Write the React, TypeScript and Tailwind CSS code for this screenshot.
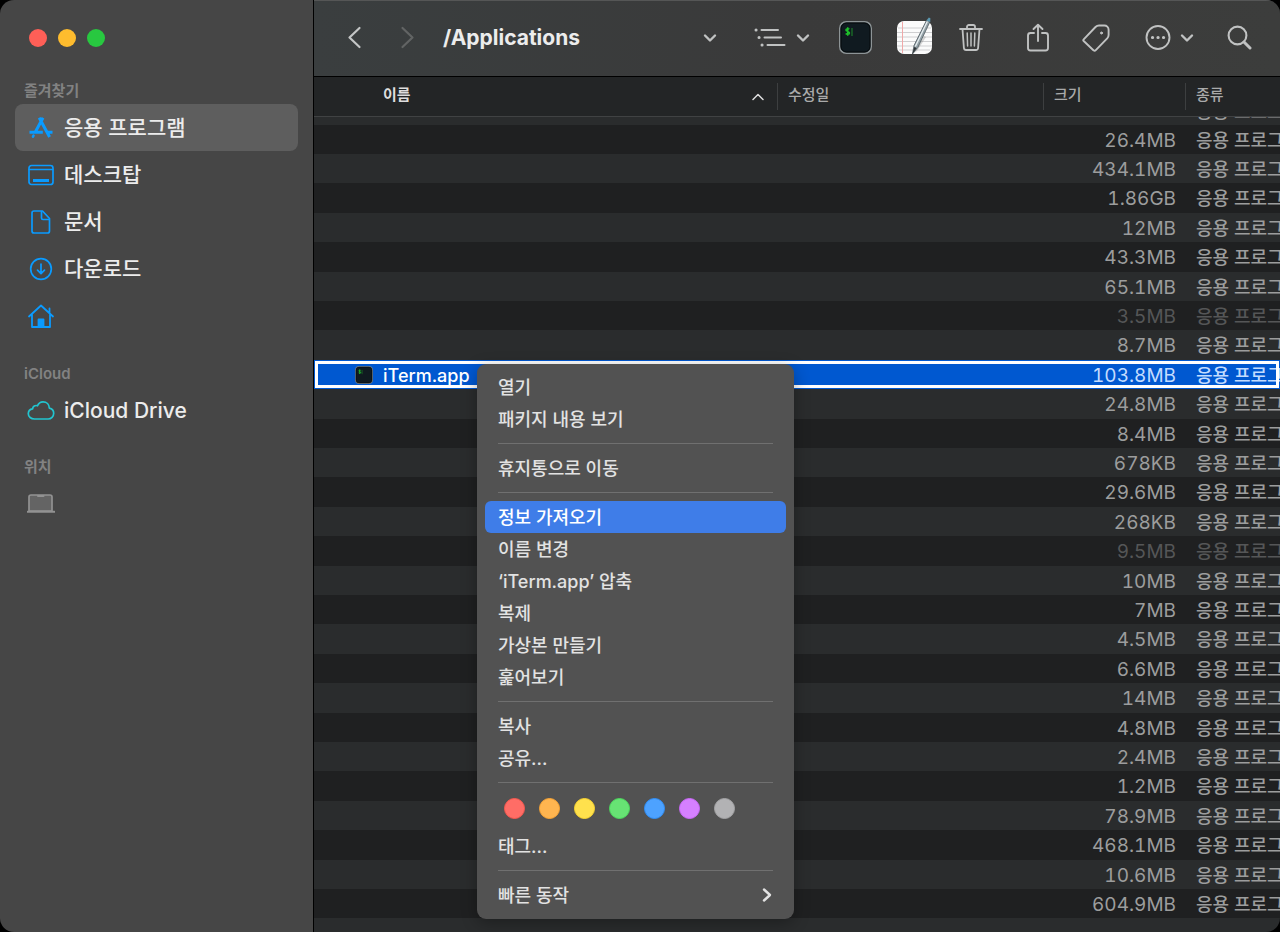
import React from "react";

type Row = { size: string; dim?: boolean; selected?: boolean };

const rows: Row[] = [
  { size: "26.4MB" },
  { size: "434.1MB" },
  { size: "1.86GB" },
  { size: "12MB" },
  { size: "43.3MB" },
  { size: "65.1MB" },
  { size: "3.5MB", dim: true },
  { size: "8.7MB" },
  { size: "103.8MB", selected: true },
  { size: "24.8MB" },
  { size: "8.4MB" },
  { size: "678KB" },
  { size: "29.6MB" },
  { size: "268KB" },
  { size: "9.5MB", dim: true },
  { size: "10MB" },
  { size: "7MB" },
  { size: "4.5MB" },
  { size: "6.6MB" },
  { size: "14MB" },
  { size: "4.8MB" },
  { size: "2.4MB" },
  { size: "1.2MB" },
  { size: "78.9MB" },
  { size: "468.1MB" },
  { size: "10.6MB" },
  { size: "604.9MB" },
];

const KIND = "응용 프로그램";

function Svg({ w, h, className, sw = 2, children }: { w: number; h: number; className?: string; sw?: number; children: React.ReactNode }) {
  return (
    <svg
      width={w}
      height={h}
      viewBox={`0 0 ${w} ${h}`}
      fill="none"
      stroke="currentColor"
      strokeWidth={sw}
      strokeLinecap="round"
      strokeLinejoin="round"
      className={`block shrink-0 ${className ?? ""}`}
      aria-hidden="true"
    >
      {children}
    </svg>
  );
}

function ChevronDown() {
  return (
    <Svg w={14} h={10} sw={2.4}>
      <path d="M2 2.5l5 5 5-5" />
    </Svg>
  );
}

function TerminalIcon({ size }: { size: number }) {
  return (
    <svg width={size} height={size} viewBox="0 0 33 33" className="block shrink-0" aria-hidden="true">
      <rect x="0.75" y="0.75" width="31.5" height="31.5" rx="6.5" fill="#101a20" stroke="#8d9496" strokeWidth="1.5" />
      <rect x="2" y="2" width="29" height="29" rx="5.5" fill="none" stroke="#05090b" strokeWidth="1" />
      <path d="M10.3 8.2c-.6-.8-3.4-.9-3.4.8 0 1.8 3.6 1 3.6 2.9 0 1.7-3 1.6-3.8.6M8.7 6.300v8.400" fill="none" stroke="#1fc32b" strokeWidth="1.500" />
      <path d="M13 7v8" stroke="#1b7a28" strokeWidth="1.200" />
    </svg>
  );
}

function NotesIcon() {
  return (
    <svg width="35" height="38" viewBox="0 0 35 38" className="block shrink-0" aria-hidden="true">
      <rect x="0" y="4" width="35" height="33" rx="7" fill="#fbfbfb" />
      <path d="M1 11h33M0 15.500h35M0 20h35M0 24.500h35M0 29h35M2 33h31" stroke="#cfcfd1" strokeWidth="1" />
      <path d="M5.500 5v31" stroke="#f0a8a8" strokeWidth="1" />
      <path d="M17 36l10-17 2 1-9 14z" fill="#777" opacity=".3" />
      <path d="M29.700 3l3.300 1.600L20.800 30.500 15.500 37l1.500-8.500z" fill="#93a0a6" stroke="#4d585e" strokeWidth=".8" />
      <path d="M30.300 4.500L18.300 29.500" stroke="#e8eef1" strokeWidth="1.300" />
      <path d="M29.500 3.500l2.300-3 1.600.8-.2 3.600z" fill="#5b98b0" />
      <path d="M17.300 30l2.500 1-4.500 6z" fill="#2f3538" />
    </svg>
  );
}

const favorites = [
  {
    label: "응용 프로그램",
    active: true,
    icon: (
      <Svg w={28} h={28} sw={3} className="text-[#0a9bff]">
        <path d="M12.200 3.800L22.600 23M16 3.800L8.200 18.300M2.500 18.300h13.300M20 18.300h5.500" strokeLinecap="butt" />
        <path d="M6.500 21.700l-.5.900" strokeWidth="2.600" />
      </Svg>
    ),
  },
  {
    label: "데스크탑",
    icon: (
      <Svg w={28} h={28} sw={1.7} className="text-[#0a9bff]">
        <rect x="2" y="4.500" width="24" height="19" rx="2.500" />
        <path d="M2 8.500h24" strokeWidth="1.300" />
        <path d="M6 19.500h16" strokeWidth="3" className="[stroke-linecap:butt]" />
      </Svg>
    ),
  },
  {
    label: "문서",
    icon: (
      <Svg w={28} h={28} sw={1.7} className="text-[#0a9bff]">
        <path d="M7 3h8.500l7 7.500V23a2 2 0 0 1-2 2H7a2 2 0 0 1-2-2V5a2 2 0 0 1 2-2z" />
        <path d="M14.500 3.500V10a1.500 1.500 0 0 0 1.500 1.500h6" />
      </Svg>
    ),
  },
  {
    label: "다운로드",
    icon: (
      <Svg w={28} h={28} sw={1.7} className="text-[#0a9bff]">
        <circle cx="14" cy="14" r="10.300" />
        <path d="M14 9v9.500M10.500 15.200l3.500 3.500 3.500-3.500" />
      </Svg>
    ),
  },
  {
    label: "",
    aria: "홈",
    icon: (
      <Svg w={28} h={28} sw={1.8} className="text-[#0a9bff]">
        <path d="M2 14.500L14 3.500 26 14.500M5 12.500V25h18V12.500M22.500 11V6.500" />
        <path d="M11.500 25v-7.500h5V25z" fill="currentColor" />
      </Svg>
    ),
  },
];

function SideItem({ label, icon, active, aria }: { label: string; icon: React.ReactNode; active?: boolean; aria?: string }) {
  return (
    <li>
      <button
        aria-label={aria}
        className={`flex h-[47px] w-full items-center gap-[9px] rounded-lg pt-px pl-3 text-left text-[21px] font-medium text-[#ececec] ${active ? "bg-[#5e5e5e]" : ""}`}
      >
        {icon}
        {label && <span>{label}</span>}
      </button>
    </li>
  );
}

function SideLabel({ children }: { children: React.ReactNode }) {
  return <h2 className="flex h-7 items-center pt-0.5 pl-[9px] text-[15px] font-semibold text-[#828282]">{children}</h2>;
}

function Sidebar() {
  return (
    <nav className="w-[314px] shrink-0 border-r border-black bg-[#464646] px-[15px]">
      <div className="flex h-[76px] items-center gap-[11px] pl-[14px]">
        <button aria-label="닫기" className="size-[18px] rounded-full bg-[#ff5f57]" />
        <button aria-label="최소화" className="size-[18px] rounded-full bg-[#febc2e]" />
        <button aria-label="확대" className="size-[18px] rounded-full bg-[#28c840]" />
      </div>
      <SideLabel>즐겨찾기</SideLabel>
      <ul>
        {favorites.map((f, i) => (
          <SideItem key={i} {...f} />
        ))}
      </ul>
      <div className="mt-5">
        <SideLabel>iCloud</SideLabel>
        <ul>
          <SideItem
            label="iCloud Drive"
            icon={
              <Svg w={28} h={28} sw={1.7} className="text-[#22c5d0]">
                <path d="M7.500 22C4 22 1.300 19.800 1.300 16.800c0-2.600 1.900-4.600 4.300-4.900.1-2.600 2.600-4 4.900-3.100C11.500 6.300 13.600 4.800 16 4.800c3.600 0 6.200 2.700 6.300 6.300 2.600.5 4.400 2.500 4.400 5.200 0 3.200-2.500 5.700-5.600 5.700z" />
              </Svg>
            }
          />
        </ul>
      </div>
      <div className="mt-[18px]">
        <SideLabel>위치</SideLabel>
        <ul>
          <SideItem
            label=""
            aria="컴퓨터"
            icon={
              <Svg w={28} h={28} sw={1.7} className="text-[#929292]">
                <path d="M2 21V7A2 2 0 0 1 4 5h19a2 2 0 0 1 2 2V21z" fill="#646464" />
                <path d="M.5 21.800h27" strokeWidth="2" />
                <path d="M11 6h5.500" strokeWidth="2" />
              </Svg>
            }
          />
        </ul>
      </div>
    </nav>
  );
}

function Toolbar() {
  return (
    <header className="flex h-[77px] items-center border-t border-b border-t-[#555656] border-b-black bg-linear-to-r from-[#3a3e3f] via-[#3a3a3a] to-[#3c3d3c] pr-7 pb-0.5 pl-[33px] text-[#c0c2c2]">
      <button aria-label="뒤로" className="text-[#c4c6c6]">
        <Svg w={15} h={24} sw={2.2}>
          <path d="M12.500 2L2.500 11.500l10 9.500" />
        </Svg>
      </button>
      <button aria-label="앞으로" className="ml-[38px] text-[#626464]">
        <Svg w={15} h={24} sw={2.2}>
          <path d="M2.500 2l10 9.500-10 9.500" />
        </Svg>
      </button>
      <h1 className="ml-7 flex-1 text-[21px] font-bold text-[#ececec]">/Applications</h1>
      <button aria-label="경로">
        <ChevronDown />
      </button>
      <button aria-label="보기 방식" className="ml-[37px] flex items-center gap-[10px]">
        <Svg w={32} h={22} sw={2}>
          <path d="M7.500 3h16.500M10.500 10.500h16.500M13.500 18h17" />
          <path d="M2 3h.1M5 10.500h.1M8 18h.1" strokeWidth="3" />
        </Svg>
        <ChevronDown />
      </button>
      <button aria-label="터미널" className="ml-[29px]">
        <TerminalIcon size={33} />
      </button>
      <button aria-label="텍스트 편집기" className="ml-[25px] pb-[3px]">
        <NotesIcon />
      </button>
      <button aria-label="휴지통" className="ml-[27px]">
        <Svg w={24} h={28} sw={1.8}>
          <path d="M1 5h22M3.500 5l1.400 19a2.200 2.200 0 0 0 2.200 2h9.800a2.200 2.200 0 0 0 2.200-2l1.400-19M8 4.500V2.800a1.800 1.800 0 0 1 1.800-1.800h4.400A1.800 1.800 0 0 1 16 2.800v1.700" />
          <path d="M8.200 9l.4 13M12 9v13M15.800 9l-.4 13" strokeWidth="1.500" />
        </Svg>
      </button>
      <button aria-label="공유" className="ml-[43px]">
        <Svg w={24} h={30} sw={1.9}>
          <path d="M8 10H4.500A2.500 2.500 0 0 0 2 12.500V25a2.500 2.500 0 0 0 2.500 2.500h15A2.500 2.500 0 0 0 22 25V12.500A2.500 2.500 0 0 0 19.500 10H16" />
          <path d="M12 18V2M7.500 6L12 1.700 16.500 6" />
        </Svg>
      </button>
      <button aria-label="태그" className="ml-8">
        <Svg w={28} h={28} sw={1.9}>
          <path d="M1.700 15.300L13.500 3c1-1 2-1.500 3.500-1.500h5.500c1.300 0 2 .4 2.800 1.200.9.900 1.300 1.600 1.300 3V11c0 1.500-.4 2.300-1.400 3.400L13.800 26.200c-.8.8-1.600.8-2.400 0L1.700 17c-.6-.6-.6-1.100 0-1.700z" />
          <circle cx="19.500" cy="9" r="1" fill="currentColor" strokeWidth="1" />
        </Svg>
      </button>
      <button aria-label="동작" className="ml-[34px] flex items-center gap-2">
        <Svg w={28} h={28} sw={1.9}>
          <circle cx="14" cy="13.500" r="11.500" />
          <path d="M8.500 13.500h.1M14 13.500h.1M19.500 13.500h.1" strokeWidth="3.200" />
        </Svg>
        <ChevronDown />
      </button>
      <button aria-label="검색" className="ml-8">
        <Svg w={26} h={26} sw={2.1}>
          <circle cx="11.500" cy="10.500" r="8.900" />
          <path d="M18 17l6 6" strokeWidth="3" />
        </Svg>
      </button>
    </header>
  );
}

function FileTable() {
  const th = "p-0 text-left text-[15px] font-medium text-[#a9aaaa]";
  const inner = "flex h-[27px] items-center border-l border-[#3d3f40] pl-[10px] pb-0.5";
  const cell = "p-0 pt-0.5";
  return (
    <table className="w-full table-fixed border-collapse whitespace-nowrap">
      <colgroup>
        <col />
        <col className="w-[266px]" />
        <col className="w-[142px]" />
        <col className="w-[95px]" />
      </colgroup>
      <thead>
        <tr className="h-[39px] border-b border-[#404243] bg-[#232526]">
          <th className="p-0 text-left text-[15px] font-bold text-[#dedede]">
            <div className="flex h-[27px] items-center justify-between pr-3 pb-0.5 pl-[69px]">
              이름
              <Svg w={14} h={8} sw={1.5} className="mt-1">
                <path d="M2 6.500L7 1.500l5 5" />
              </Svg>
            </div>
          </th>
          <th className={th}>
            <div className={inner}>수정일</div>
          </th>
          <th className={th}>
            <div className={inner}>크기</div>
          </th>
          <th className={th}>
            <div className={inner}>종류</div>
          </th>
        </tr>
      </thead>
      <tbody className="text-[18px] leading-[27px] text-[#9c9d9d]">
        <tr className="h-2 bg-[#2a2c2d]">
          <td colSpan={3} className="p-0" />
          <td className="p-0 pl-[11px] font-medium">
            <div className="flex h-2 items-end overflow-hidden">{KIND}</div>
          </td>
        </tr>
      </tbody>
      <tbody className="text-[18px] leading-[27px] text-[#9c9d9d]">
        {rows.map((r, i) => (
          <tr
            key={i}
            className={`h-[29px] [&:nth-child(5n)]:h-[30px] [&:nth-child(5n+3)]:h-[30px] ${
              r.selected
                ? "bg-[#0058d0] text-[#c3dcff] outline-[3px] -outline-offset-4 outline-white outline-solid"
                : r.dim
                  ? "text-[#555657] odd:bg-[#1f2021] even:bg-[#2a2c2d]"
                  : "odd:bg-[#1f2021] even:bg-[#2a2c2d]"
            }`}
          >
            <td className={cell}>
              {r.selected && (
                <div className="flex items-center gap-[10px] pl-[41px] font-medium text-white">
                  <TerminalIcon size={18} />
                  iTerm.app
                </div>
              )}
            </td>
            <td className={cell} />
            <td className={`${cell} pr-[9px] text-right text-[19px] tabular-nums`}>{r.size}</td>
            <td className={`${cell} overflow-hidden pl-[11px] font-medium`}>{KIND}</td>
          </tr>
        ))}
      </tbody>
    </table>
  );
}

function MenuItem({ children, active }: { children: React.ReactNode; active?: boolean }) {
  return (
    <button
      role="menuitem"
      className={`flex h-8 w-full items-center justify-between rounded-md pr-[14px] pl-[13px] text-left ${active ? "bg-[#3f7de8] text-white" : ""}`}
    >
      {children}
    </button>
  );
}

function Separator() {
  return (
    <div role="separator" className="flex h-[17px] items-center px-[13px]">
      <div className="h-px w-full bg-[#707070]" />
    </div>
  );
}

const tags = [
  { name: "빨간색", cls: "bg-[#ff6d66] border-[#f9584f]" },
  { name: "주황색", cls: "bg-[#ffb550] border-[#faa534]" },
  { name: "노란색", cls: "bg-[#ffe14d] border-[#fbd62f]" },
  { name: "초록색", cls: "bg-[#67e374] border-[#4cd95d]" },
  { name: "파란색", cls: "bg-[#4da2ff] border-[#2f90fb]" },
  { name: "보라색", cls: "bg-[#d580ff] border-[#cb68fa]" },
  { name: "회색", cls: "bg-[#b2b2b4] border-[#a4a4a6]" },
];

function ContextMenu() {
  return (
    <div
      role="menu"
      className="absolute top-[364px] left-[477px] w-[317px] rounded-[9px] bg-[#525252] px-2 pt-[7px] pb-2 text-[18px] font-medium text-[#e2e2e2] shadow-[0_4px_16px_rgba(0,0,0,0.3)]"
    >
      <MenuItem>열기</MenuItem>
      <MenuItem>패키지 내용 보기</MenuItem>
      <Separator />
      <MenuItem>휴지통으로 이동</MenuItem>
      <Separator />
      <MenuItem active>정보 가져오기</MenuItem>
      <MenuItem>이름 변경</MenuItem>
      <MenuItem>‘iTerm.app’ 압축</MenuItem>
      <MenuItem>복제</MenuItem>
      <MenuItem>가상본 만들기</MenuItem>
      <MenuItem>훑어보기</MenuItem>
      <Separator />
      <MenuItem>복사</MenuItem>
      <MenuItem>공유...</MenuItem>
      <Separator />
      <div className="flex h-[39px] items-center gap-[14px] pb-1 pl-[19px]">
        {tags.map((t) => (
          <button key={t.name} aria-label={t.name} className={`size-[21px] rounded-full border ${t.cls}`} />
        ))}
      </div>
      <MenuItem>태그...</MenuItem>
      <Separator />
      <MenuItem>
        빠른 동작
        <Svg w={10} h={16} sw={2.4}>
          <path d="M2 2.500L8 8l-6 5.500" />
        </Svg>
      </MenuItem>
    </div>
  );
}

export default function App() {
  return (
    <div className="relative h-screen overflow-hidden bg-black font-['Inter','Noto_Sans_CJK_KR',sans-serif]">
      <div className="flex h-full overflow-hidden rounded-[14px]">
        <Sidebar />
        <main className="min-w-0 flex-1 overflow-hidden bg-[#2a2c2d]">
          <Toolbar />
          <FileTable />
        </main>
      </div>
      <ContextMenu />
    </div>
  );
}
